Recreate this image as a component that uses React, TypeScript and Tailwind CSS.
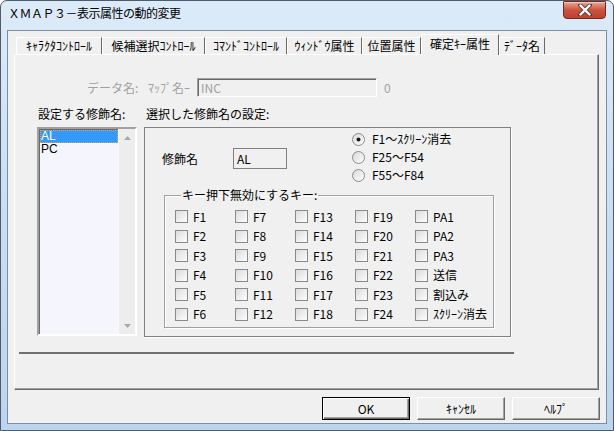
import React from "react";

const font = "font-['Noto_Sans_CJK_JP',sans-serif]";

const tabs = [
	{ label: "ｷｬﾗｸﾀｺﾝﾄﾛｰﾙ", w: "w-[86px]" },
	{ label: "候補選択ｺﾝﾄﾛｰﾙ", w: "w-[103px]" },
	{ label: "ｺﾏﾝﾄﾞｺﾝﾄﾛｰﾙ", w: "w-[82px]" },
	{ label: "ｳｨﾝﾄﾞｳ属性", w: "w-[75px]" },
	{ label: "位置属性", w: "w-[59px]" },
	{ label: "確定ｷｰ属性", w: "w-[78px]", active: true },
	{ label: "ﾃﾞｰﾀ名", w: "w-[46px]" },
];

const keyColumns = [
	["F1", "F2", "F3", "F4", "F5", "F6"],
	["F7", "F8", "F9", "F10", "F11", "F12"],
	["F13", "F14", "F15", "F16", "F17", "F18"],
	["F19", "F20", "F21", "F22", "F23", "F24"],
	["PA1", "PA2", "PA3", "送信", "割込み", "ｽｸﾘｰﾝ消去"],
];

const radios = ["F1～ｽｸﾘｰﾝ消去", "F25～F54", "F55～F84"];

function Radio({ checked }: { checked?: boolean }) {
	return (
		<svg width="13" height="13" viewBox="0 0 13 13" className="shrink-0">
			<defs>
				<linearGradient id="rg" x1="0" y1="0" x2="1" y2="1">
					<stop offset="0" stopColor="#d8d8d8" />
					<stop offset="1" stopColor="#ffffff" />
				</linearGradient>
			</defs>
			<circle cx="6.5" cy="6.5" r="6" fill="url(#rg)" stroke="#8a8a8a" />
			{checked && <circle cx="6.5" cy="6.5" r="2" fill="#1a1a1a" />}
		</svg>
	);
}

function Checkbox({ label }: { label: string }) {
	return (
		<div className="flex items-center gap-[5px] whitespace-nowrap">
			<div className="h-[13px] w-[13px] shrink-0 border border-[#8a8a8a] bg-gradient-to-br from-[#dcdcdc] to-[#fdfdfd]" />
			<span className="leading-[14px]">{label}</span>
		</div>
	);
}

function Button({ label, main }: { label: string; main?: boolean }) {
	return (
		<button
			type="button"
			className={
				main
					? "flex h-[23px] w-[88px] items-center justify-center border border-black bg-[#f0f0f0] leading-[14px] shadow-[inset_1px_1px_0_#fff,inset_-1px_-1px_0_#696969,inset_-2px_-2px_0_#a0a0a0]"
					: "flex h-[23px] w-[88px] items-center justify-center border border-t-white border-l-white border-r-[#696969] border-b-[#696969] bg-[#f0f0f0] leading-[14px] shadow-[inset_-1px_-1px_0_#a0a0a0]"
			}
		>
			{label}
		</button>
	);
}

export default function App() {
	return (
		<div
			className={`${font} flex h-[431px] w-[614px] flex-col overflow-hidden rounded-t-[7px] border border-[#4f5b69] bg-gradient-to-b from-[#dcebf9] via-[#c8def3] to-[#bcd5ee] text-[12px] text-black`}
		>
			{/* Title bar */}
			<div className="flex h-[29px] shrink-0 items-start pl-[7px] pr-[7px]">
				<span className="pt-[5px] leading-[14px] tracking-[-0.5px]">
					ＸＭＡＰ３－表示属性の動的変更
				</span>
				<div className="ml-auto flex h-[18px] w-[43px] items-center justify-center rounded-b-[4px] rounded-t-[1px] border border-[#6e2a22] bg-gradient-to-b from-[#e9a896] via-[#c9523f] to-[#c0412e] shadow-[inset_0_1px_0_#f5c7bb]">
					<svg width="14" height="12" viewBox="0 0 14 12">
						<path
							d="M2 1 L12 11 M12 1 L2 11"
							stroke="#5a3a36"
							strokeWidth="4"
							strokeLinecap="round"
							fill="none"
						/>
						<path
							d="M2.5 1.5 L11.5 10.5 M11.5 1.5 L2.5 10.5"
							stroke="#ffffff"
							strokeWidth="2.4"
							strokeLinecap="round"
							fill="none"
						/>
					</svg>
				</div>
			</div>

			{/* Client area */}
			<div className="mx-[6px] flex h-[394px] flex-col border border-[#7d8ea3] bg-[#f0f0f0] pl-[6px] pr-[6px] pt-[3px]">
				{/* Tabs */}
				<div className="flex h-[20px] items-end pl-[2px]">
					{tabs.map((t) =>
						t.active ? (
							<div
								key={t.label}
								className={`${t.w} relative z-10 -mb-px flex h-[21px] items-center justify-center rounded-tl-[2px] border-l border-t border-r border-l-white border-t-white border-r-[#696969] bg-[#f0f0f0] pb-[2px] leading-[14px]`}
							>
								{t.label}
							</div>
						) : (
							<div
								key={t.label}
								className={`${t.w} flex h-[17px] items-center justify-center rounded-tl-[2px] border-l border-t border-r border-l-white border-t-white border-r-[#696969] leading-[14px]`}
							>
								{t.label}
							</div>
						),
					)}
				</div>

				{/* Tab panel */}
				<div className="flex h-[336px] w-[585px] flex-col border border-t-white border-l-white border-r-[#696969] border-b-[#696969] shadow-[inset_-1px_-1px_0_#a0a0a0]">
					{/* Data name row */}
					<div className="mt-[23px] flex h-[19px] items-center pl-[72px] text-[#a0a0a0]">
						<span className="w-[61px] leading-[14px]">データ名:</span>
						<span className="w-[49px] leading-[14px]">ﾏｯﾌﾟ名ｰ</span>
						<div className="flex h-[19px] w-[180px] items-center border border-t-[#a0a0a0] border-l-[#a0a0a0] border-r-white border-b-white pl-[3px] leading-[14px] shadow-[inset_1px_1px_0_#696969]">
							INC
						</div>
						<span className="ml-[7px] leading-[14px]">0</span>
					</div>

					{/* Labels */}
					<div className="mt-[10px] flex h-[14px] pl-[23px] leading-[14px]">
						<span className="w-[108px]">設定する修飾名:</span>
						<span>選択した修飾名の設定:</span>
					</div>

					{/* Main row */}
					<div className="mt-[6px] flex items-start gap-[7px] pl-[22px]">
						{/* List box */}
						<div className="flex h-[209px] w-[100px] border-2 border-t-[#a0a0a0] border-l-[#a0a0a0] border-r-white border-b-white bg-[#f5f6fd] shadow-[inset_1px_1px_0_#696969]">
							<div className="flex flex-1 flex-col pl-px pt-px font-['Liberation_Sans',sans-serif] text-[12px] leading-[13px]">
								<div className="h-[13px] bg-[#3399ff] pl-px text-white outline-1 -outline-offset-1 outline-dotted outline-[#e8a33a]">
									AL
								</div>
								<div className="h-[13px] pl-px">PC</div>
							</div>
							<div className="flex w-[17px] flex-col justify-between border-l border-[#f8f8f8] bg-[#ededed]">
								<div className="flex h-[17px] items-center justify-center">
									<svg width="7" height="4" viewBox="0 0 7 4">
										<path d="M0 4 L3.5 0 L7 4 Z" fill="#a8a8a8" />
									</svg>
								</div>
								<div className="flex h-[17px] items-center justify-center">
									<svg width="7" height="4" viewBox="0 0 7 4">
										<path d="M0 0 L3.5 4 L7 0 Z" fill="#a8a8a8" />
									</svg>
								</div>
							</div>
						</div>

						{/* Settings group */}
						<div className="flex h-[210px] w-[367px] flex-col border border-[#808080] pt-[2px] shadow-[1px_1px_0_#fff]">
							<div className="flex">
								<div className="flex w-[207px] items-start pl-[17px] pt-[18px]">
									<span className="flex h-[21px] w-[71px] items-center leading-[14px]">
										修飾名
									</span>
									<div className="flex h-[21px] w-[54px] items-center border border-[#808080] pl-[3px] leading-[14px]">
										AL
									</div>
								</div>
								<div className="flex flex-col">
									{radios.map((r, i) => (
										<div
											key={r}
											className="flex h-[18px] items-center gap-[7px] whitespace-nowrap leading-[14px]"
										>
											<Radio checked={i === 0} />
											<span>{r}</span>
										</div>
									))}
								</div>
							</div>

							<fieldset className="ml-[19px] mt-[4px] h-[140px] w-[330px] border border-[#a0a0a0] pl-[10px] pt-[5px] shadow-[inset_1px_1px_0_#fff,1px_1px_0_#fff]">
								<legend className="ml-[6px] px-px leading-[14px]">
									キー押下無効にするキー:
								</legend>
								<div className="grid grid-flow-col grid-cols-[repeat(5,60px)] grid-rows-[repeat(6,19.5px)]">
									{keyColumns.flat().map((k) => (
										<Checkbox key={k} label={k} />
									))}
								</div>
							</fieldset>
						</div>
					</div>

					{/* Separator */}
					<div className="ml-[4px] mt-[15px] h-[2px] w-[495px] bg-[#6f6f6f]" />
				</div>

				{/* Buttons */}
				<div className="mt-[7px] flex justify-end gap-[7px]">
					<Button label="OK" main />
					<Button label="ｷｬﾝｾﾙ" />
					<Button label="ﾍﾙﾌﾟ" />
				</div>
			</div>
		</div>
	);
}
